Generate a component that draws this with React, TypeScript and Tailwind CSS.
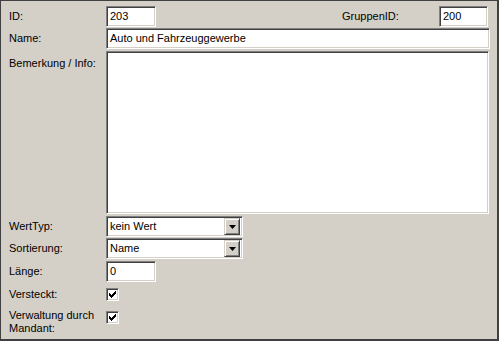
const sunken =
  "border border-t-[#808080] border-l-[#808080] border-r-white border-b-white shadow-[inset_1px_1px_0_#404040,inset_-1px_-1px_0_#d4d0c8] bg-white";

const Label = ({ children }: { children: React.ReactNode }) => (
  <div className="w-[97px] shrink-0 leading-[13px]">{children}</div>
);

const TextBox = ({ value, className }: { value: string; className: string }) => (
  <div className={`${sunken} ${className} flex items-center pl-[3px]`}>{value}</div>
);

const Select = ({ value }: { value: string }) => (
  <div className={`${sunken} w-[137px] h-[21px] flex items-center justify-between p-[2px] pl-[3px]`}>
    <span>{value}</span>
    <div className="w-[16px] h-[17px] bg-[#d4d0c8] border border-t-[#d4d0c8] border-l-[#d4d0c8] border-r-[#404040] border-b-[#404040] shadow-[inset_1px_1px_0_#ffffff,inset_-1px_-1px_0_#808080] flex items-center justify-center">
      <svg width="7" height="4" viewBox="0 0 7 4">
        <path d="M0 0h7L3.5 4z" fill="#000" />
      </svg>
    </div>
  </div>
);

const Check = () => (
  <div className={`${sunken} w-[13px] h-[13px] flex items-center justify-center`}>
    <svg width="7" height="7" viewBox="0 0 7 7">
      <path d="M0 2h1v1h1v1h1V3h1V2h1V1h1V0h1v3H6v1H5v1H4v1H3v1H2V6H1V5H0z" fill="#000" />
    </svg>
  </div>
);

const App = () => {
  return (
    <main className="w-[499px] h-[341px] bg-[#d4d0c8] border-t border-l border-r-2 border-b-2 border-[#404040] text-black text-[11px] font-['Liberation_Sans',Arial,sans-serif] pl-[8px]">
      <div className="flex items-center h-[21px] mt-[5px]">
        <Label>ID:</Label>
        <TextBox value="203" className="w-[50px] h-[21px]" />
        <div className="ml-auto w-[97px]">GruppenID:</div>
        <TextBox value="200" className="w-[49px] h-[21px] mr-[9px]" />
      </div>
      <div className="flex items-center h-[21px] mt-[1px]">
        <Label>Name:</Label>
        <TextBox value="Auto und Fahrzeuggewerbe" className="w-[384px] h-[21px]" />
      </div>
      <div className="flex items-start h-[163px] mt-[2px]">
        <div className="w-[97px] shrink-0 pt-[4px]">Bemerkung / Info:</div>
        <div className={`${sunken} w-[383px] h-[163px]`} />
      </div>
      <div className="flex items-center h-[21px] mt-[2px]">
        <Label>WertTyp:</Label>
        <Select value="kein Wert" />
      </div>
      <div className="flex items-center h-[21px] mt-[1px]">
        <Label>Sortierung:</Label>
        <Select value="Name" />
      </div>
      <div className="flex items-center h-[21px] mt-[2px]">
        <Label>Länge:</Label>
        <TextBox value="0" className="w-[50px] h-[21px]" />
      </div>
      <div className="flex items-center h-[13px] mt-[6px]">
        <Label>Versteckt:</Label>
        <Check />
      </div>
      <div className="flex items-start mt-[8px]">
        <Label>
          Verwaltung durch
          <br />
          Mandant:
        </Label>
        <div className="mt-[2px]">
          <Check />
        </div>
      </div>
    </main>
  );
};

export default App;
